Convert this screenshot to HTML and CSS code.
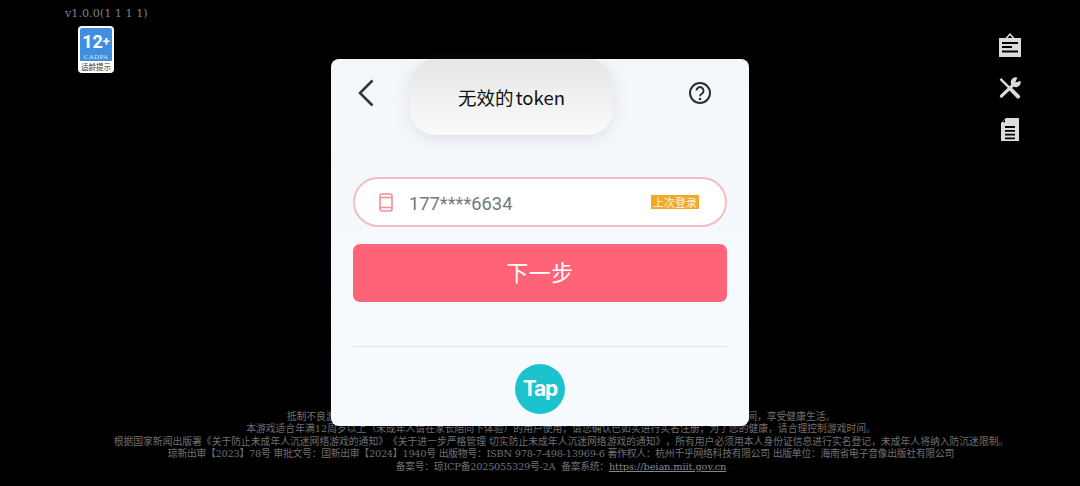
FILE: index.html
```html
<!DOCTYPE html>
<html lang="zh-CN">
  <head>
    <meta charset="UTF-8" />
    <meta name="viewport" content="width=device-width, initial-scale=1.0" />
    <title>登录</title>
    <link rel="stylesheet" href="styles.css">
  </head>
  <body>
    <div class="screen">
      <div class="top">
        <div class="top-left">
          <div class="version">v1.0.0(1 1 1 1)</div>
          <div class="age-badge">
            <div class="age-blue">
              <span class="age-num">12<span class="age-plus">+</span></span>
              <span class="age-org">CADPA</span>
            </div>
            <div class="age-tip">适龄提示</div>
          </div>
        </div>
        <div class="tools">
          <svg width="24" height="25" viewBox="0 0 24 25">
            <path fill="#dedcd8" d="M1 5h6.500L12 0l4.500 5H23v19H1z" />
            <path fill="#000" d="M9.500 5h5L12 2.300z" />
            <path fill="none" stroke="#000" stroke-width="2" d="M4 10h16M4 14h10M4 18.500h16" />
          </svg>
          <svg width="24" height="22" viewBox="0 0 24 23">
            <path fill="none" stroke="#dedcd8" stroke-width="2.400" d="M2 2l11 11" />
            <path fill="none" stroke="#dedcd8" stroke-width="4" stroke-linecap="round" d="M13.500 13.500l7 7" />
            <path fill="none" stroke="#dedcd8" stroke-width="3.400" stroke-linecap="round" d="M3 20L15 8.500" />
            <circle cx="18" cy="5.500" r="5.200" fill="#dedcd8" />
            <path fill="#000" d="M17.500 5.800L20 0h5v3.500z" />
          </svg>
          <svg width="18" height="23" viewBox="0 0 18 23">
            <path fill="#dedcd8" d="M5 0h13v23H0V5z" />
            <path fill="#000" d="M4 1.500L1.500 4 4 4.500z" />
            <path fill="none" stroke="#000" stroke-width="1.800" d="M4 9h10M4 12.800h10M4 16.600h10M4 20.400h10" />
          </svg>
        </div>
      </div>

      <div class="legal">
        <p>抵制不良游戏，拒绝盗版游戏。注意自我保护，谨防受骗上当。适度游戏益脑，沉迷游戏伤身。合理安排时间，享受健康生活。</p>
        <p>本游戏适合年满12周岁以上（未成年人请在家长陪同下体验）的用户使用；请您确认已如实进行实名注册；为了您的健康，请合理控制游戏时间。</p>
        <p>根据国家新闻出版署《关于防止未成年人沉迷网络游戏的通知》《关于进一步严格管理 切实防止未成年人沉迷网络游戏的通知》，所有用户必须用本人身份证信息进行实名登记，未成年人将纳入防沉迷限制。</p>
        <p class="legal-tight">琼新出审【2023】78号 审批文号：国新出审【2024】1940号 出版物号：ISBN 978-7-498-13969-6 著作权人：杭州千乎网络科技有限公司 出版单位：海南省电子音像出版社有限公司</p>
        <p class="legal-tight">备案号：琼ICP备2025055329号-2A &nbsp;备案系统：<a class="legal-link" href="#">https://beian.miit.gov.cn</a></p>
      </div>

      <div class="modal">
        <div class="modal-head">
          <svg width="16" height="28" viewBox="0 0 16 28">
            <path fill="none" stroke="#33383d" stroke-width="2.600" d="M14.500 1.500L2 14l12.500 12.500" />
          </svg>
          <svg width="24" height="24" viewBox="0 0 24 24">
            <circle cx="12" cy="12" r="10" fill="none" stroke="#2b2e33" stroke-width="2" />
            <path fill="none" stroke="#2b2e33" stroke-width="2" d="M8.500 9.500a3.500 3.500 0 1 1 5.500 3c-1.300.8-2 1.400-2 2.800" />
            <circle cx="12" cy="18" r="1.300" fill="#2b2e33" />
          </svg>
        </div>

        <div class="phone-field">
          <svg class="phone-icon" width="14" height="19" viewBox="0 0 14 19">
            <rect x="1" y="1" width="12" height="17" rx="2" fill="none" stroke="#f58d9c" stroke-width="1.600" />
            <path fill="none" stroke="#f58d9c" stroke-width="1.600" d="M1 4.500h12M1 14.500h12" />
          </svg>
          <span class="phone-num">177****6634</span>
          <span class="last-tag">上次登录</span>
        </div>

        <button class="next-btn" type="button">下一步</button>

        <div class="divider"></div>

        <div class="tap-logo">Tap</div>
      </div>

      <div class="toast">无效的 token</div>
    </div>
  </body>
</html>
```

FILE: styles.css
```css
body {
  margin: 0;
  background-color: #000;
  font-family: "Noto Sans CJK SC", "Noto Sans", sans-serif;
}

.screen {
  position: relative;
  width: 1080px;
  height: 486px;
  overflow: hidden;
  display: flex;
  flex-direction: column;
  justify-content: space-between;
}

.top {
  display: flex;
  justify-content: space-between;
  padding: 6px 58px 0 65px;
}

.version {
  font-family: "DejaVu Serif", "Noto Sans CJK SC", serif;
  font-size: 11.200px;
  line-height: 15px;
  color: #808285;
}

.age-badge {
  width: 36px;
  height: 47px;
  margin: 5px 0 0 13px;
  padding: 2px;
  box-sizing: border-box;
  background-color: #fff;
  border-radius: 4px;
  display: flex;
  flex-direction: column;
}

.age-blue {
  height: 33px;
  background-color: #3f8fdc;
  border-radius: 2px 2px 0 0;
  display: flex;
  flex-direction: column;
  align-items: center;
  color: #fff;
}

.age-num {
  font-family: "Roboto", sans-serif;
  font-weight: 700;
  font-size: 18px;
  line-height: 22px;
  margin-top: 3px;
}

.age-plus {
  font-size: 13px;
  vertical-align: 2px;
}

.age-org {
  font-family: "Liberation Serif", serif;
  font-size: 7px;
  line-height: 8px;
  letter-spacing: 0.3px;
  color: #d6e8f8;
}

.age-tip {
  font-size: 7.500px;
  line-height: 11px;
  text-align: center;
  white-space: nowrap;
  color: #333;
}

.tools {
  display: flex;
  flex-direction: column;
  align-items: center;
  gap: 19px;
  padding-top: 27px;
}

.legal {
  padding: 0 0 13px 42px;
  font-family: "DejaVu Serif", "Noto Sans CJK SC", serif;
  font-size: 9.800px;
  line-height: 12.400px;
  text-align: center;
  color: #6f7073;
  white-space: nowrap;
  text-spacing-trim: space-all;
}

.legal p {
  margin: 0;
}

.legal .legal-tight {
  letter-spacing: -0.25px;
}

.legal-link {
  color: #85878a;
  letter-spacing: -0.1px;
}

.modal {
  position: absolute;
  top: 59px;
  left: 331px;
  width: 418px;
  height: 367px;
  box-sizing: border-box;
  padding: 0 22px;
  background: linear-gradient(180deg, #f4f7fa, #f7faff);
  border-radius: 8px;
  display: flex;
  flex-direction: column;
}

.modal-head {
  height: 118px;
  padding: 20px 15px 0 5px;
  box-sizing: border-box;
  display: flex;
  justify-content: space-between;
  align-items: flex-start;
}

.modal-head svg:last-child {
  margin-top: 2px;
}

.phone-field {
  height: 50px;
  box-sizing: border-box;
  padding: 0 26px 0 24px;
  background-color: #fff;
  border: 2px solid #f4bcc3;
  border-radius: 25px;
  display: flex;
  align-items: center;
}

.phone-icon {
  margin-right: 16px;
}

.phone-num {
  flex: 1;
  padding-top: 2px;
  font-family: "Roboto", sans-serif;
  font-size: 18.300px;
  color: #74787e;
}

.last-tag {
  width: 48px;
  height: 14px;
  background-color: #f0a92c;
  color: #fdf3dc;
  font-size: 11px;
  line-height: 14px;
  text-align: center;
}

.next-btn {
  height: 58px;
  margin-top: 17px;
  padding: 0 0 4px;
  border: none;
  border-radius: 7px;
  background-color: #ff6377;
  color: #fff;
  font-family: inherit;
  font-size: 22px;
  letter-spacing: 0.500px;
}

.divider {
  height: 1px;
  margin-top: 44px;
  background-color: #e0e3e7;
}

.tap-logo {
  width: 50px;
  height: 50px;
  margin: 17px auto 0;
  border-radius: 50%;
  background-color: #1cc3cf;
  color: #fff;
  font-family: "Inter", sans-serif;
  font-weight: 700;
  font-size: 21px;
  letter-spacing: -1.200px;
  line-height: 50px;
  text-align: center;
}

.toast {
  position: absolute;
  top: 59px;
  left: 410px;
  width: 203px;
  height: 76px;
  background: linear-gradient(180deg, #e6e6e6, #fafafa);
  border-radius: 26px;
  box-shadow: 0 4px 16px rgba(120, 130, 140, 0.18);
  color: #111;
  font-size: 18.500px;
  line-height: 77px;
  text-align: center;
  word-spacing: -2px;
}
```
